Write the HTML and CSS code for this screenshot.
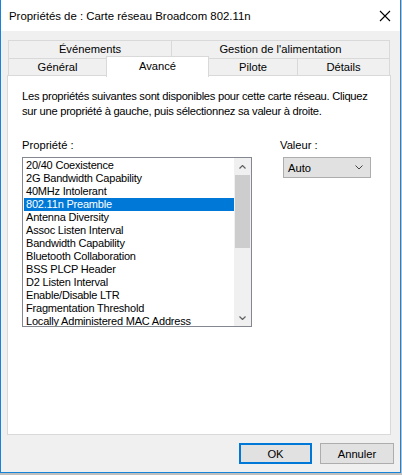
FILE: index.html
```html
<!DOCTYPE html>
<html lang="fr">
<head>
<meta charset="utf-8">
<title>Propriétés de : Carte réseau Broadcom 802.11n</title>
<link rel="stylesheet" href="styles.css">
</head>
<body>
<div class="window">
  <div class="titlebar">
    <span class="title">Propriétés de : Carte réseau Broadcom 802.11n</span>
    <svg class="close" width="12" height="12" viewBox="0 0 12 12"><path d="M1 1L11 11M11 1L1 11" stroke="#000" stroke-width="1.1" fill="none"/></svg>
  </div>
  <div class="client">
    <div class="tabs">
      <div class="tab-row row1">
        <div class="tab w-evt">Événements</div>
        <div class="tab w-gest">Gestion de l'alimentation</div>
      </div>
      <div class="tab-row row2">
        <div class="tab w-gen">Général</div>
        <div class="tab w-av selected">Avancé</div>
        <div class="tab w-pil">Pilote</div>
        <div class="tab w-det">Détails</div>
      </div>
    </div>
    <div class="panel">
      <p class="desc">Les propriétés suivantes sont disponibles pour cette carte réseau. Cliquez<br>sur une propriété à gauche, puis sélectionnez sa valeur à droite.</p>
      <div class="fields">
        <div class="field-prop">
          <div class="label">Propriété :</div>
          <div class="listbox">
            <ul class="items">
              <li>20/40 Coexistence</li>
              <li>2G Bandwidth Capability</li>
              <li>40MHz Intolerant</li>
              <li class="sel">802.11n Preamble</li>
              <li>Antenna Diversity</li>
              <li>Assoc Listen Interval</li>
              <li>Bandwidth Capability</li>
              <li>Bluetooth Collaboration</li>
              <li>BSS PLCP Header</li>
              <li>D2 Listen Interval</li>
              <li>Enable/Disable LTR</li>
              <li>Fragmentation Threshold</li>
              <li>Locally Administered MAC Address</li>
            </ul>
            <div class="scrollbar">
              <div class="sb-btn"><svg width="7" height="4" viewBox="0 0 7 4"><path d="M0.5 3.5L3.5 0.5L6.5 3.5" stroke="#606060" stroke-width="1.2" fill="none"/></svg></div>
              <div class="sb-track"><div class="sb-thumb"></div></div>
              <div class="sb-btn"><svg width="7" height="4" viewBox="0 0 7 4"><path d="M0.5 0.5L3.5 3.5L6.5 0.5" stroke="#606060" stroke-width="1.2" fill="none"/></svg></div>
            </div>
          </div>
        </div>
        <div class="field-val">
          <div class="label">Valeur :</div>
          <div class="combo"><span>Auto</span><svg width="8" height="5" viewBox="0 0 8 5"><path d="M0.5 0.5L4 4L7.5 0.5" stroke="#444" stroke-width="1" fill="none"/></svg></div>
        </div>
      </div>
    </div>
    <div class="buttons">
      <button class="btn default">OK</button>
      <button class="btn cancel">Annuler</button>
    </div>
  </div>
</div>
</body>
</html>
```
FILE: styles.css
```css
html {
  background: #bfbfbf;
}
body {
  margin: 0;
  font-family: "Liberation Sans", Arial, sans-serif;
  font-size: 11.2px;
  color: #000;
}
.window {
  width: 401px;
  height: 473px;
  box-sizing: border-box;
  border: 1px solid #1883d7;
  border-top: 0;
  background: #f0f0f0;
  display: flex;
  flex-direction: column;
}
.titlebar {
  height: 31px;
  flex: none;
  background: #fff;
  display: flex;
  align-items: center;
  justify-content: space-between;
  padding: 0 9px 0 8px;
}
.title {
  font-size: 11.4px;
  padding-top: 1px;
}
.close {
  display: block;
}
.client {
  flex: 1;
  padding: 9px 8px 0 6px;
  display: flex;
  flex-direction: column;
}
.tabs {
  margin-left: 1px;
}
.tab-row {
  display: flex;
}
.tab {
  box-sizing: border-box;
  border: 1px solid #d9d9d9;
  background: #f0f0f0;
  text-align: center;
  white-space: nowrap;
}
.tab + .tab {
  margin-left: -1px;
}
.row1 .tab {
  height: 19px;
  line-height: 17px;
}
.row2 {
  height: 18px;
  margin-top: -1px;
}
.row2 .tab {
  height: 18px;
  line-height: 17px;
}
.row2 .tab.selected {
  height: 21px;
  margin-top: -2px;
  line-height: 18px;
  background: #fff;
  border-bottom: 0;
  position: relative;
  z-index: 1;
}
.w-evt { width: 164px; }
.w-gest { width: 219px; }
.w-gen { width: 99px; }
.w-av { width: 103px; }
.w-pil { width: 90px; }
.w-det { width: 93px; }
.panel {
  box-sizing: border-box;
  width: 384px;
  height: 360px;
  margin-top: -1px;
  border: 1px solid #d9d9d9;
  background: #fff;
  padding: 13px 0 0 14px;
}
.desc {
  margin: 0;
  line-height: 15px;
  white-space: nowrap;
  letter-spacing: -0.28px;
}
.fields {
  display: flex;
  margin-top: 19px;
}
.label {
  line-height: 15px;
  margin-bottom: 4px;
}
.field-prop {
  width: 230px;
}
.field-val {
  margin-left: 28px;
}
.listbox {
  box-sizing: border-box;
  width: 230px;
  height: 170px;
  border: 1px solid #828790;
  background: #fff;
  display: flex;
}
.items {
  list-style: none;
  margin: 0;
  padding: 1px 0 0 1px;
  flex: 1;
  overflow: hidden;
  font-size: 11px;
  letter-spacing: -0.2px;
}
.items li {
  height: 13px;
  line-height: 13px;
  padding-left: 2px;
  white-space: nowrap;
}
.items li.sel {
  background: #0078d7;
  color: #fff;
}
.scrollbar {
  width: 17px;
  background: #f0f0f0;
  display: flex;
  flex-direction: column;
}
.sb-btn {
  height: 17px;
  display: flex;
  align-items: center;
  justify-content: center;
}
.sb-btn svg {
  display: block;
}
.sb-track {
  flex: 1;
}
.sb-thumb {
  height: 73px;
  margin: 0 1px;
  background: #cdcdcd;
}
.combo {
  box-sizing: border-box;
  width: 88px;
  height: 21px;
  margin-left: 3px;
  border: 1px solid #adadad;
  background: #e1e1e1;
  display: flex;
  align-items: center;
  justify-content: space-between;
  padding: 0 7px 0 4px;
}
.combo svg {
  display: block;
}
.buttons {
  display: flex;
  justify-content: flex-end;
  gap: 8px;
  margin-top: 8px;
  margin-right: -2px;
}
.btn {
  box-sizing: border-box;
  height: 21px;
  margin: 0;
  padding: 0;
  font-family: inherit;
  font-size: 11.2px;
  color: #000;
  background: #e1e1e1;
  border: 1px solid #adadad;
}
.btn.default {
  width: 73px;
  border: 2px solid #0078d7;
}
.btn.cancel {
  width: 74px;
}
```
